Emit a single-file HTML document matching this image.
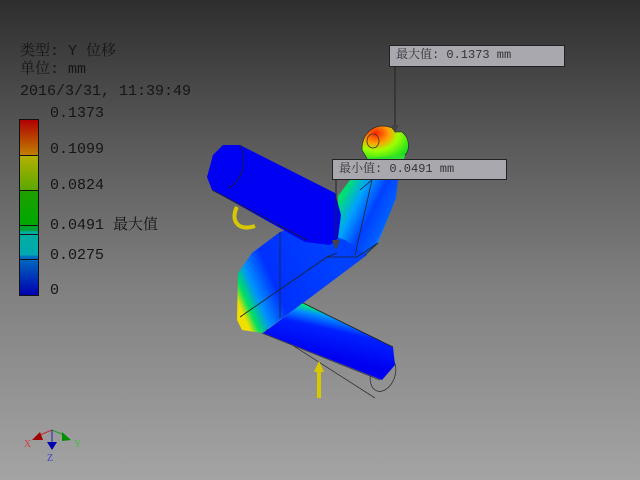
<!DOCTYPE html>
<html><head><meta charset="utf-8"><style>
html,body{margin:0;padding:0}
body{width:640px;height:480px;overflow:hidden;position:relative;background:linear-gradient(#2e2e2e 0%,#5a5a5a 30%,#808080 60%,#a4a4a4 100%);font-family:"Liberation Mono","Noto Serif CJK SC",monospace;color:#1a1a1a}
.t{position:absolute;font-size:15px;line-height:15px;white-space:nowrap;color:#151515}
.box{position:absolute;background:#a9a8af;border:1px solid #222;font-size:12px;line-height:19px;padding-left:6px;box-sizing:border-box;color:#333}
</style></head><body>
<div class="t" style="left:20px;top:44px">类型: Y 位移</div>
<div class="t" style="left:20px;top:62px">单位: mm</div>
<div class="t" style="left:20px;top:84px">2016/3/31, 11:39:49</div>
<div style="position:absolute;left:19px;top:119px;width:20px;height:177px;border:1px solid #111;box-sizing:border-box;background:linear-gradient(#b00000 0%,#c08000 20%,#b4b000 20.5%,#5aa800 40%,#20a000 40.5%,#00a800 59%,#00a040 63%,#00b0a0 64%,#00a8b0 77%,#0070c0 78%,#0000b0 100%)">
<div style="position:absolute;left:0;right:0;top:35px;border-top:1px solid #111"></div>
<div style="position:absolute;left:0;right:0;top:70px;border-top:1px solid #111"></div>
<div style="position:absolute;left:0;right:0;top:105px;border-top:1px solid #111"></div>
<div style="position:absolute;left:0;right:0;top:114px;border-top:1px solid #111"></div>
<div style="position:absolute;left:0;right:0;top:139px;border-top:1px solid #111"></div>
</div>
<div class="t" style="left:50px;top:106px">0.1373</div>
<div class="t" style="left:50px;top:142px">0.1099</div>
<div class="t" style="left:50px;top:178px">0.0824</div>
<div class="t" style="left:50px;top:218px">0.0491 最大值</div>
<div class="t" style="left:50px;top:248px">0.0275</div>
<div class="t" style="left:50px;top:283px">0</div>

<svg width="640" height="480" style="position:absolute;left:0;top:0">
<defs>
<linearGradient id="gz" gradientUnits="userSpaceOnUse" x1="237" y1="300" x2="330" y2="260"><stop offset="0" stop-color="#f0e000"/><stop offset=".08" stop-color="#00e060"/><stop offset=".2" stop-color="#0090ff"/><stop offset=".4" stop-color="#0030ff"/><stop offset="1" stop-color="#0040ff"/></linearGradient>
<linearGradient id="gl" gradientUnits="userSpaceOnUse" x1="340" y1="360" x2="350" y2="315"><stop offset="0" stop-color="#0000f0"/><stop offset=".6" stop-color="#0020ff"/><stop offset=".85" stop-color="#0090ff"/><stop offset="1" stop-color="#00f070"/></linearGradient>
<radialGradient id="g3" cx=".3" cy=".2" r=".8"><stop offset="0" stop-color="#ff2000"/><stop offset=".35" stop-color="#ffa000"/><stop offset=".6" stop-color="#a0ff00"/><stop offset="1" stop-color="#20e020"/></radialGradient>
<linearGradient id="ga" gradientUnits="userSpaceOnUse" x1="345" y1="190" x2="395" y2="215"><stop offset="0" stop-color="#00e070"/><stop offset=".3" stop-color="#00a0ff"/><stop offset=".6" stop-color="#0040ff"/><stop offset=".9" stop-color="#0060ff"/><stop offset="1" stop-color="#30a0ff"/></linearGradient>
</defs>
<!-- ghost lower cylinder -->
<g fill="none" stroke="#333" stroke-width="0.8">
<ellipse cx="383" cy="374" rx="12" ry="18" transform="rotate(20 383 374)"/>
<path d="M240 315 L240 308 M250 318 L375 398 M262 333 L380 380"/>
<ellipse cx="255" cy="317" rx="12" ry="8"/>
<ellipse cx="272" cy="322" rx="12" ry="9"/>
</g>
<!-- yellow hook -->
<path d="M237 207 C230 220,238 232,255 226" fill="none" stroke="#d8c800" stroke-width="4"/>
<!-- upper arm -->
<polygon points="338,196 350,180 398,180 396,198 378,243 365,255 338,250" fill="url(#ga)"/>
<!-- Z lower part -->
<polygon points="280,232 252,253 238,273 237,320 242,330 262,333 303,303 367,255 345,240 300,225" fill="url(#gz)"/>
<!-- lower cylinder -->
<polygon points="303,303 393,347 395,365 382,380 263,333" fill="url(#gl)"/>
<!-- upper cylinder -->
<polygon points="223,145 240,145 335,193 341,215 338,238 330,245 305,242 212,190 207,177 213,155" fill="#0000f2"/>
<path d="M240 145 C248 158,242 183,228 188" fill="none" stroke="#222" stroke-width=".8"/>
<!-- bracket -->
<path d="M362 150 C362 130,378 122,392 128 L395 132 L402 132 C410 138,410 150,405 155 L400 162 L368 160 Z" fill="url(#g3)" stroke="#222" stroke-width=".6"/>
<ellipse cx="373" cy="141" rx="6" ry="7" fill="none" stroke="#333" stroke-width=".8"/>
<polygon points="367,158 405,155 402,168 375,170" fill="#30e030"/>
<!-- outlines -->
<g fill="none" stroke="#222" stroke-width=".8">
<path d="M280 232 L280 318"/>
<path d="M240 317 L327 257 L337 253"/>
<path d="M327 257 L357 257 L378 243"/>
<path d="M360 190 L372 180 L355 255"/>
<path d="M365 255 L378 243"/>
<path d="M303 303 L393 347"/>
<path d="M212 190 L307 240"/>
</g>
<!-- yellow arrow -->
<path d="M319 366 L319 398" stroke="#d8c800" stroke-width="4"/>
<polygon points="314,372 319,361 324,372" fill="#d8c800"/>
<!-- leader lines -->
<path d="M395 66 L395 130 M336 179 L336 245" stroke="#222" stroke-width="1"/>
<polygon points="391,125 399,125 395,133" fill="#444"/>
<polygon points="332,240 340,240 336,250" fill="#444"/>
<!-- axes -->
<g>
<path d="M40 435 L52 430" stroke="#c03030" fill="none"/>
<path d="M52 430 L64 435" stroke="#20a020"/>
<path d="M52 430 L52 448" stroke="#2020c0"/>
<polygon points="32,440 40,432 43,440" fill="#a00000"/>
<polygon points="62,432 71,440 62,441" fill="#009000"/>
<polygon points="47,442 57,442 52,450" fill="#0000b0"/>
<text x="24" y="447" font-size="10" fill="#d04040" font-family="Liberation Serif">X</text>
<text x="74" y="447" font-size="10" fill="#40c040" font-family="Liberation Serif">Y</text>
<text x="47" y="461" font-size="10" fill="#4040d0" font-family="Liberation Serif">Z</text>
</g>
</svg>
<div class="box" style="left:389px;top:45px;width:176px;height:22px">最大值: 0.1373 mm</div>
<div class="box" style="left:332px;top:159px;width:175px;height:21px">最小值: 0.0491 mm</div>
</body></html>
